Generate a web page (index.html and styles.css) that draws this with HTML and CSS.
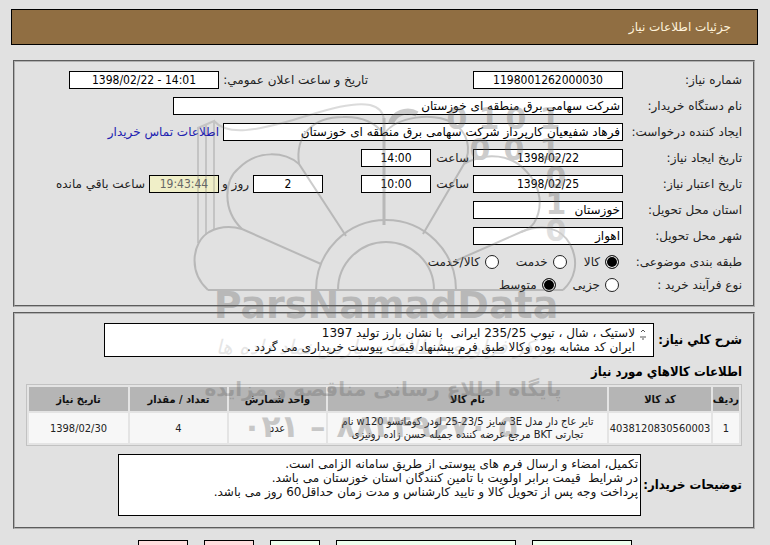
FILE: index.html
```html
<!DOCTYPE html>
<html lang="fa" dir="rtl">
<head>
	<meta charset="utf-8">
	<meta name="viewport" content="width=device-width">
	<title>جزئیات اطلاعات نیاز</title>
	<link rel="stylesheet" href="styles.css">
</head>
<body>
	<header class="title">جزئیات اطلاعات نیاز</header>
	<form class="page">
		<fieldset class="box info">
			<div class="row">
				<label class="name" for="num">شماره نیاز:</label>
				<input class="field mid center" id="num" type="text" value="1198001262000030">
				<label class="second" for="announce">تاریخ و ساعت اعلان عمومي:</label>
				<input class="field mid center" id="announce" type="text" dir="ltr" value="1398/02/22 - 14:01">
			</div>
			<div class="row">
				<label class="name" for="org">نام دستگاه خریدار:</label>
				<input class="field wide" id="org" type="text" value="شرکت سهامی برق منطقه ای خوزستان">
			</div>
			<div class="row">
				<label class="name" for="creator">ایجاد کننده درخواست:</label>
				<input class="field long" id="creator" type="text" value="فرهاد شفیعیان کارپرداز شرکت سهامی برق منطقه ای خوزستان">
				<a class="contact" href="#">اطلاعات تماس خریدار</a>
			</div>
			<div class="row">
				<label class="name" for="cdate">تاریخ ایجاد نیاز:</label>
				<input class="field mid center" id="cdate" type="text" dir="ltr" value="1398/02/22">
				<label class="hour" for="ctime">ساعت</label>
				<input class="field short center" id="ctime" type="text" value="14:00">
			</div>
			<div class="row">
				<label class="name" for="edate">تاریخ اعتبار نیاز:</label>
				<input class="field mid center" id="edate" type="text" dir="ltr" value="1398/02/25">
				<label class="hour" for="etime">ساعت</label>
				<input class="field short center" id="etime" type="text" value="10:00">
				<input class="field short center days" id="days" type="text" value="2">
				<label class="and" for="days">روز و</label>
				<input class="field short center left-time" id="remain" type="text" value="19:43:44">
				<label for="remain">ساعت باقي مانده</label>
			</div>
			<div class="row">
				<label class="name" for="state">استان محل تحویل:</label>
				<input class="field mid" id="state" type="text" value="خوزستان">
			</div>
			<div class="row">
				<label class="name" for="city">شهر محل تحویل:</label>
				<input class="field mid" id="city" type="text" value="اهواز">
			</div>
			<div class="row options">
				<span class="name">طبقه بندی موضوعی:</span>
				<label class="option"><input type="radio" name="kind" checked>کالا</label>
				<label class="option"><input type="radio" name="kind">خدمت</label>
				<label class="option"><input type="radio" name="kind">کالا/خدمت</label>
			</div>
			<div class="row options">
				<span class="name">نوع فرآیند خرید :</span>
				<label class="option"><input type="radio" name="process">جزیی</label>
				<label class="option"><input type="radio" name="process" checked>متوسط</label>
			</div>
		</fieldset>

		<fieldset class="box goods">
			<div class="desc">
				<label class="strong" for="desc">شرح كلي نیاز:</label>
				<div class="area">
					<svg class="spin" width="12" height="14" viewBox="0 0 12 14"><path d="M4 5L6 3L8 5M3 10H9M5 12H7" fill="none" stroke="#555"/></svg>
					<textarea id="desc" rows="2">لاستیک ، شال ، تیوپ 235/25 ایرانی  با نشان بارز تولید 1397
ایران کد مشابه بوده وکالا طبق فرم پیشنهاد قیمت پیوست خریداری می گردد .</textarea>
				</div>
			</div>
			<h2 class="strong heading">اطلاعات كالاهاي مورد نیاز</h2>
			<table class="items">
				<thead>
					<tr>
						<th class="c-row">ردیف</th>
						<th class="c-code">کد کالا</th>
						<th>نام کالا</th>
						<th class="c-unit">واحد شمارش</th>
						<th class="c-unit">تعداد / مقدار</th>
						<th class="c-date">تاریخ نیاز</th>
					</tr>
				</thead>
				<tbody>
					<tr>
						<td>1</td>
						<td>4038120830560003</td>
						<td>تایر عاج دار مدل 3E سایز 23/5-25 لودر کوماتسو w120 نام<br>تجارتی BKT مرجع عرضه کننده جمیله حسن زاده رونیزی</td>
						<td>عدد</td>
						<td>4</td>
						<td>1398/02/30</td>
					</tr>
				</tbody>
			</table>
			<div class="desc notes">
				<label class="strong" for="notes">توضیحات خریدار:</label>
				<div class="area">
					<textarea id="notes" rows="4">تکمیل، امضاء و ارسال فرم های پیوستی از طریق سامانه الزامی است.
در شرایط  قیمت برابر اولویت با تامین کنندگان استان خوزستان می باشد.
پرداخت وجه پس از تحویل کالا و تایید کارشناس و مدت زمان حداقل60 روز می باشد.</textarea>
				</div>
			</div>
		</fieldset>

		<div class="buttons">
			<button type="button" class="btn green medium">پاسخ به نیاز</button>
			<button type="button" class="btn green large">مشاهده مدارک پیوستی</button>
			<button type="button" class="btn green">چاپ</button>
			<button type="button" class="btn red">بازگشت</button>
			<button type="button" class="btn red">خروج</button>
		</div>
	</form>

	<!-- watermark, lies over the whole form -->
	<svg class="mark" width="400" height="360" viewBox="180 90 400 360" direction="ltr">
		<g class="lines">
			<path d="M208 290H563"/>
			<path d="M316 290A70 70 0 0 1 456 290M338 290A48 48 0 0 1 434 290"/>
			<path d="M208 290C188 272 192 242 209 232Q224 224 242 229L321 264"/>
			<path d="M242 229C222 210 224 180 239 168C258 149 285 152 299 164L346 236"/>
			<path d="M299 164C295 135 313 117 343 117Q370 116 384 134"/>
			<path d="M384 225V118" stroke-width="3"/>
			<path d="M384 134C397 116 433 112 453 123C468 132 472 150 464 164L423 234"/>
			<path d="M464 164C487 151 512 155 526 171C542 187 543 208 534 223Q530 229 521 232L453 262"/>
			<path d="M521 232C543 223 561 228 570 244C580 263 574 280 563 290"/>
			<path d="M198 243V128L214 121V230M206 235V125M214 121C228 137 260 129 286 122C315 114 348 101 370 105Q383 108 384 120" opacity=".7"/>
		</g>
		<g class="digits">
			<path d="M391 124A17 15 0 0 1 417 114" fill="none" stroke="#646464" stroke-width="6"/>
			<text x="457" y="129">0</text><text x="489" y="129">1</text><text x="516" y="129">0</text><text x="550" y="129">1</text>
			<text x="480" y="160">0</text><text x="514" y="160">0</text><text x="550" y="160">1</text>
			<text x="556" y="188">0</text><text x="556" y="214">1</text><text x="556" y="241" opacity=".6">0</text>
		</g>
		<text class="brand" x="386" y="318">ParsNamadData</text>
		<text class="script" x="386" y="354">مرکز فرآوری اطلاعات پارس نماد داده ها</text>
		<text class="slogan" x="383" y="396">پایگاه اطلاع رسانی مناقصه و مزایده</text>
		<text class="phone" x="380" y="437">۰۲۱ – ۸۸۳۴۹۶۷۰ ۵</text>
	</svg>
</body>
</html>
```
FILE: styles.css
```css
body{
	margin:9px 12px 0 11px;
	background-color:#e1e1e1;
	font-family:"DejaVu Sans",sans-serif;
	font-size:12px;
	line-height:16px;
	color:#222;
	position:relative;
	overflow:hidden;
}
.title{
	padding:9px 26px;
	border:1px solid #000;
	background-color:#906e42;
	color:#fff3dc;
}
.page{
	margin:15px 3px 0 2px;
}
.box{
	margin:0 0 5px;
	border:2px groove #b0b0b0;
	min-width:0;
}
.info{
	padding:9px 11px 6px;
}
.row{
	display:flex;
	align-items:center;
	gap:4px;
	height:18px;
	margin-bottom:8px;
	white-space:nowrap;
}
.name{
	flex:none;
	width:115px;
}
.field{
	flex:none;
	box-sizing:border-box;
	height:18px;
	padding:0 2px;
	border:1px solid #000;
	background-color:#fff;
	color:#000;
	font:inherit;
}
.center{
	font-family:"DejaVu Sans Condensed","DejaVu Sans",sans-serif;
	text-align:center;
}
.short{width:70px;}
.mid{width:150px;}
.long{width:400px;}
.wide{width:450px;}
.second{
	width:145px;
	margin-right:101px;
}
.hour{width:34px;}
.days{margin-right:34px;}
.and{width:26px;}
.left-time{
	background-color:#f0efc8;
	color:#666;
}
.contact{
	color:#2020b0;
	text-decoration:none;
}
.options{
	gap:17px;
	margin-bottom:5px;
}
.options .name{
	width:106px;
}
.option{
	display:flex;
	align-items:center;
	gap:5px;
}
.option input{
	appearance:none;
	box-sizing:border-box;
	width:14px;
	height:14px;
	margin:0;
	border:1px solid #222;
	border-radius:50%;
	background-color:#fff;
}
.option input:checked{
	background-color:#000;
	box-shadow:inset 0 0 0 1px #fff;
}
.goods{
	padding:9px 11px 11px;
	margin-bottom:11px;
}
.desc{
	display:flex;
	align-items:center;
	gap:4px;
	padding-left:78px;
}
.strong{
	flex:none;
	margin:0;
	color:#000;
	font-family:"DejaVu Sans Condensed","DejaVu Sans",sans-serif;
	font-size:13px;
	font-weight:bold;
}
.desc .strong{
	width:84px;
	white-space:nowrap;
}
.area{
	flex:1;
	display:flex;
	border:1px solid #000;
	background-color:#fff;
	padding:2px;
}
.spin{
	flex:none;
	margin:1px 2px;
}
textarea{
	display:block;
	flex:1;
	min-width:0;
	box-sizing:border-box;
	padding:0;
	border:0;
	background:none;
	resize:none;
	overflow:hidden;
	color:#111;
	font:inherit;
	line-height:14px;
}
.heading{
	margin:7px 0 4px;
}
.items{
	width:100%;
	table-layout:fixed;
	border:1px solid #c2c2c2;
	border-spacing:2px;
	background-color:#e4e4e4;
	font-family:"DejaVu Sans Condensed","DejaVu Sans",sans-serif;
	font-size:11px;
	line-height:13px;
	text-align:center;
}
.items th{
	height:24px;
	padding:0;
	background-color:#b5b5b5;
	color:#111;
}
.items td{
	height:30px;
	padding:0;
	background-color:#f7f7f7;
	white-space:nowrap;
}
.c-row{width:26px;}
.c-code{width:102px;}
.c-unit{width:97px;}
.c-date{width:99px;}
.notes{
	margin-top:8px;
	padding-left:92px;
}
.notes .strong{
	width:97px;
}
.buttons{
	display:flex;
	gap:16px;
	padding-right:123px;
}
.btn{
	flex:none;
	width:50px;
	height:30px;
	padding:0;
	border:1px solid #000;
	color:#222;
	font:inherit;
	font-size:11px;
}
.medium{width:100px;}
.large{width:180px;}
.green{background-color:#eeffee;}
.red{background-color:#ffdddd;}
.mark{
	position:absolute;
	top:81px;
	left:calc(50% - 205px);
	pointer-events:none;
	opacity:.32;
}
.lines{
	fill:none;
	stroke:#646464;
	stroke-width:2;
}
.mark text{
	fill:#646464;
	text-anchor:middle;
}
.digits text{
	font:bold 30px "DejaVu Sans",sans-serif;
}
.mark .brand{
	font:bold 38px "DejaVu Sans",sans-serif;
}
.mark .script{
	font:italic 20px "DejaVu Sans",sans-serif;
	opacity:.5;
}
.mark .slogan{
	font:bold 20px "DejaVu Sans",sans-serif;
}
.mark .phone{
	font:bold 31px "DejaVu Sans",sans-serif;
}
```
